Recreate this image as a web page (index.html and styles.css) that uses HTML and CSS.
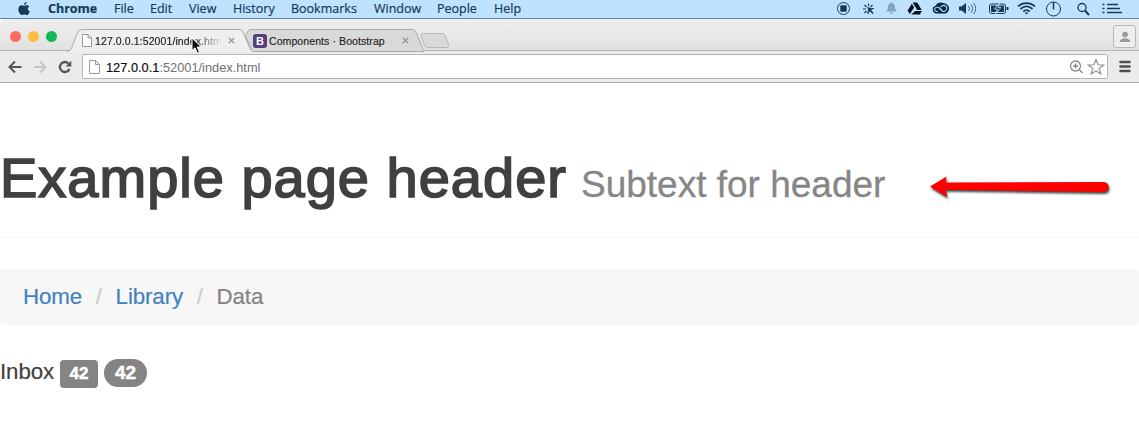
FILE: index.html
```html
<!DOCTYPE html>
<html lang="en">
<head>
<meta charset="utf-8">
<title>127.0.0.1:52001/index.html</title>
<link rel="stylesheet" href="styles.css">
</head>
<body>
<header class="menubar">
  <svg class="apple" width="12" height="14" viewBox="0 0 12 14"><path d="M8.6 0C8.7 1.5 7.500 3 6 3 5.900 1.600 7.200.2 8.600 0ZM6.200 3.900C7 3.900 7.600 3.200 8.800 3.200c.9 0 1.900.5 2.500 1.400-2.100 1.200-1.800 4 .5 4.900-.5 1.500-1.600 3.500-2.900 3.500-.9 0-1.300-.6-2.500-.6s-1.600.6-2.500.6C2.300 13 .3 10 .3 7.300c0-2.600 1.600-4.100 3.300-4.100 1.100 0 1.900.7 2.600.7Z"/></svg>
  <nav class="menus">
    <span class="m-chrome">Chrome</span><span class="m-file">File</span><span class="m-edit">Edit</span><span class="m-view">View</span><span class="m-history">History</span><span class="m-bookmarks">Bookmarks</span><span class="m-window">Window</span><span class="m-people">People</span><span class="m-help">Help</span>
  </nav>
  <svg class="status" width="302" height="18" viewBox="0 0 302 18" fill="none" stroke="#153b59">
    <circle cx="13.500" cy="8.500" r="6"/><rect x="10.300" y="5.300" width="6.400" height="6.400" rx="1" fill="#153b59" stroke="none"/>
    <path d="M38.500 3.500V6M34.500 5l2 2M42.500 5l-2 2M33 9h3M34.500 13l2-2M38 11v3M41.500 8.500H44" stroke-width="1.200"/><path d="M37.200 6.700l5.800 2.400-2 .9 2.700 2.900-1.200 1.100-2.600-2.800-1 1.900z" fill="#153b59" stroke="none"/>
    <path d="M61.500 2.200c.7 0 .9.600.9 1 2 .5 2.700 2 2.700 4 0 2.300.7 3.200 2.400 4.300H55.500c1.700-1.100 2.400-2 2.400-4.300 0-2 .7-3.500 2.700-4 0-.4.200-1 .9-1ZM59.700 12.500h3.600c-.4 1.800-3.200 1.800-3.600 0z" fill="#7fa6c5" stroke="none"/>
    <path d="M82.700 2.500h4.500l4.500 7.600h-4.500zM81.900 3.700l2.200 3.900-4.300 6.500-2.200-3.700zM85.300 11H92l-2.300 3.500h-8.500z" fill="#00101f" stroke="none"/>
    <path d="M106.500 13.500a4 4 0 0 1-1-7.800C107 2.500 111 1.500 114 3.300c5.500.5 7 7.500 2 10.200z" fill="#0b2841" stroke="none"/><path d="M112.300 10.500l-1.200-1.200C108.500 6.500 105.500 6.700 104.700 8.800c-.6 2 1.500 3.300 3.200 2.400M110.500 7.300c2-3 6-2.300 6.300.8.300 3-3.300 4.400-5.500 2.200L108 6.800" stroke="#a9d5f5" stroke-width="1.100"/>
    <path d="M129 6.500h2.500L136 3v11l-4.500-3.500H129z" fill="#153b59" stroke="none"/><path d="M138.500 6a4 4 0 0 1 0 5M141 4.500a6 6 0 0 1 0 8M143.500 3a8 8 0 0 1 0 11" opacity=".75"/>
    <rect x="159.500" y="4" width="16" height="9.500" rx="2"/><path d="M161 5.500h5.500l-1.500 3.500h2l-.8 3H161zM169.500 5.500h4.500V12h-6l1.500-3.500h-2zM176.500 7h2v3h-2z" fill="#153b59" stroke="none"/><path d="M169.500 3l-5 6h3l-2 5 5.500-6.500h-3z" fill="#153b59" stroke="#bfe2fb" stroke-width=".8"/>
    <path d="M188 6.300c5-4.300 12-4.300 17 0M190.500 9c3.700-3.200 8.300-3.200 12 0M193.300 11.500c2-1.700 4.400-1.700 6.400 0" stroke-width="1.700"/><path d="M194.500 12.500h4l-2 2z" fill="#153b59" stroke="none"/>
    <circle cx="223.500" cy="9" r="7"/><path d="M223.500 2v7.500" stroke-width="1.500"/>
    <circle cx="252" cy="7.500" r="4" stroke-width="1.300"/><path d="M255 10.500l4 4.500" stroke-width="2"/>
    <path d="M277 4.500h11M277 8.500h13M277 12.500h15" stroke-width="1.700"/><path d="M272.500 4.500h2M272.500 8.500h2M272.500 12.500h2" stroke-width="1.700"/>
  </svg>
</header>
<div class="tabstrip">
  <div class="lights"><i class="red"></i><i class="yellow"></i><i class="green"></i></div>
  <div class="tab tab-active">
    <svg class="shape" width="186" height="23" viewBox="0 0 186 23"><path d="M0 22.500C3 22 4 21 5 18L10 5Q11.500.5 15 .5H172Q175 .5 176.500 4L182 17Q184 22 186 22.500V23H0z" fill="#f0eff0"/><path d="M0 22.500C3 22 4 21 5 18L10 5Q11.500.5 15 .5H172Q175 .5 176.500 4L182 17Q184 22 186 22.500" fill="none" stroke="#aaa"/></svg>
    <svg class="doc" width="10" height="13" viewBox="0 0 10 13"><path d="M.5.500h5.500l3.500 3.500v8.500h-9zM6 .5V4h3.500" fill="#fff" stroke="#999"/></svg>
    <span class="title t-fade">127.0.0.1:52001/index.html</span>
    <svg class="close" width="7" height="7" viewBox="0 0 7 7"><path d="M.8.8l5.400 5.400M6.200.8L.8 6.200" stroke="#8b8b8b" stroke-width="1.200"/></svg>
  </div>
  <div class="tab tab-back">
    <svg class="shape" width="182" height="23" viewBox="0 0 182 23"><path d="M3.500 7Q6 .5 9 .5H170Q173 .5 174.500 4l5 13q1.500 4 3 5.500H10z" fill="#dad9da" stroke="#aaa"/></svg>
    <span class="bs">B</span>
    <span class="title">Components · Bootstrap</span>
    <svg class="close" width="7" height="7" viewBox="0 0 7 7"><path d="M.8.8l5.400 5.400M6.200.8L.8 6.200" stroke="#8b8b8b" stroke-width="1.200"/></svg>
  </div>
  <svg class="newtab" width="30" height="15" viewBox="0 0 30 15"><path d="M3 .5H22Q24.500.5 25.500 3l3 8.500q1 3-1.500 3H8Q5.500 14.500 4.500 12L1 3Q.3.5 3 .5z" fill="#dad9da" stroke="#b8b8b8"/></svg>
  <div class="user"><svg width="12" height="12" viewBox="0 0 12 12"><circle cx="6" cy="3.500" r="2.800"/><path d="M.8 11c0-5 10.400-5 10.400 0z"/></svg></div>
</div>
<div class="toolbar">
  <svg class="nav" width="66" height="14" viewBox="0 0 66 14" fill="none" stroke-width="2"><path d="M14.500 7H2.500M8 1.500L2.500 7 8 12.500" stroke="#555"/><path d="M27 7h11.500M33 1.500L38.500 7 33 12.500" stroke="#c6c6c6"/><path d="M62.500 9a5 5 0 1 1-1-5.500" stroke="#555" stroke-width="2.300"/><path d="M64.300.7v5.800H58.500z" fill="#555"/></svg>
  <div class="omnibox">
    <svg width="11" height="14" viewBox="0 0 11 14"><path d="M.5.500h6L10.500 4.500v9h-10zM6.500.5v4h4" fill="#fff" stroke="#999"/></svg>
    <span class="url"><b>127.0.0.1</b>:52001/index.html</span>
    <svg class="actions" width="36" height="18" viewBox="0 0 36 18" fill="none" stroke="#8c8c8c"><circle cx="5.500" cy="8" r="5" stroke-width="1.300"/><path d="M3 8h5M5.500 5.500v5M9.200 11.500l3.300 3.500" stroke-width="1.500"/><path d="M26 1.500l2 5.300 5.700.2-4.500 3.500 1.600 5.500-4.800-3.200-4.800 3.200 1.600-5.500L18.300 7l5.700-.2z" stroke-width="1.100"/></svg>
  </div>
  <svg class="burger" width="12" height="13" viewBox="0 0 12 13"><path d="M1.500 2h9M1.500 6.500h9M1.500 11h9" stroke="#505050" stroke-width="2.600" stroke-linecap="round"/></svg>
</div>
<main class="page">
  <div class="page-header">
    <h1>Example page header</h1><small>Subtext for header</small>
    <svg class="arrow" width="190" height="32" viewBox="0 0 190 32"><path d="M5 14.500L21.500 4.500 20.500 10.500 178 10Q183.500 10 183.500 15T178 20L20.500 17.800 22 25z" fill="#f00"/></svg>
  </div>
  <ol class="breadcrumb"><li><a>Home</a></li><li class="sep">/</li><li><a>Library</a></li><li class="sep">/</li><li class="current">Data</li></ol>
  <div class="inbox"><span class="word">Inbox</span><span class="label">42</span><span class="badge">42</span></div>
</main>
<svg class="cursor" width="12" height="18" viewBox="0 0 12 18"><path d="M1 1v12.500l3-2.700 2.300 5.400 2.200-1L6.200 10H10.500z" fill="#111" stroke="#fff"/></svg>
</body>
</html>
```
FILE: styles.css
```css
* { box-sizing: border-box; }
body { margin: 0; width: 1139px; height: 434px; overflow: hidden; background: #fff; font-family: "Liberation Sans", Arial, sans-serif; }
svg { display: block; flex: none; }

.menubar { display: flex; height: 19px; padding-left: 18px; background: #bfe2ff; border-bottom: 1px solid #5c87a5; color: #153b59; }
.apple { margin-top: 2px; fill: #153b59; }
.menus { display: flex; margin-left: 18px; font: 12.500px/17px "Open Sans", sans-serif; -webkit-text-stroke: .2px #153b59; white-space: nowrap; }
.menus span { flex: none; }
.m-chrome { width: 66px; font-weight: 700; }
.m-file { width: 36px; }
.m-edit { width: 39px; }
.m-view { width: 44px; }
.m-history { width: 58px; }
.m-bookmarks { width: 83px; }
.m-window { width: 63px; }
.m-people { width: 57px; }
.status { margin-left: auto; margin-right: 7px; }

.tabstrip { display: flex; height: 32px; background: linear-gradient(#f0eff0, #e2e1e2); border-bottom: 1px solid #b5b5b5; border-top-left-radius: 5px; }
.lights { display: flex; gap: 7px; width: 67px; padding: 12px 0 0 10px; }
.lights i { width: 11px; height: 11px; border-radius: 50%; }
.red { background: #ff6b60; }
.yellow { background: #ffbe42; }
.green { background: #14b758; }
.tab { position: relative; display: flex; align-items: center; height: 23px; margin-top: 10px; font-size: 10.500px; color: #222; white-space: nowrap; }
.tab > * { position: relative; }
.tab .shape { position: absolute; left: 0; top: 0; }
.tab-active { width: 186px; padding-left: 15px; z-index: 2; }
.tab-back { width: 182px; margin-left: -11px; padding-left: 11px; }
.tab .title { -webkit-text-stroke: .15px #222; }
.t-fade { width: 131px; margin-left: 3px; letter-spacing: .1px; mask-image: linear-gradient(90deg, #000 76%, transparent 97%); }
.tab-active .close { margin-left: 2px; }
.bs { width: 14px; height: 14px; border-radius: 3px; background: #563d7c; color: #fff; font: bold 11px/14px "Liberation Sans", sans-serif; text-align: center; }
.tab-back .title { width: 131px; margin-left: 2px; letter-spacing: .09px; }
.tab-back .close { margin-left: 2px; }
.newtab { margin: 14px 0 0 -4px; }
.user { display: flex; align-items: center; justify-content: center; width: 23px; height: 23px; margin: 6px 3px 0 auto; border: 1px solid #b8b8b8; border-radius: 3px; background: #efeeef; }
.user svg { fill: #999; }

.toolbar { display: flex; align-items: center; height: 32px; padding-left: 7px; background: #ebebeb; border-bottom: 1px solid #aaa; }
.nav { margin-right: 9px; }
.omnibox { display: flex; align-items: center; width: 1026px; height: 25px; padding-left: 6px; background: #fff; border: 1px solid #b6b6b6; border-radius: 2px; }
.url { margin: 1px 0 0 6px; font-size: 12.800px; color: #707070; white-space: nowrap; }
.url b { font-weight: 400; color: #111; -webkit-text-stroke: .2px #111; }
.actions { margin-left: auto; margin-right: 1px; }
.burger { margin-left: 11px; }

.page { color: #404040; }
.page-header { display: flex; align-items: baseline; position: relative; height: 155px; padding-top: 62px; border-bottom: 1px solid #f4f4f4; white-space: nowrap; }
h1 { width: 581px; margin: 0; font-size: 56px; line-height: 66px; font-weight: 400; letter-spacing: 1px; -webkit-text-stroke: 1.700px #404040; }
small { font-size: 37px; line-height: 60px; color: #868686; -webkit-text-stroke: .3px #868686; }
.arrow { position: absolute; left: 925px; top: 89px; filter: drop-shadow(1px 2px 1px #444); }
.breadcrumb { display: flex; align-items: center; height: 56px; margin: 31px 0 0; padding: 0 0 0 23px; list-style: none; border-radius: 5px; background: #f7f7f7; font-size: 22.300px; line-height: 32px; letter-spacing: -.1px; -webkit-text-stroke: .2px; }
.breadcrumb a { color: #4282c0; }
.breadcrumb .sep { width: 33.500px; text-align: center; color: #ccc; }
.breadcrumb .current { color: #868383; }
.inbox { display: flex; align-items: center; height: 28px; margin-top: 34px; }
.word { width: 60px; margin-top: -2px; font-size: 22.300px; letter-spacing: -.1px; -webkit-text-stroke: .2px; }
.label, .badge { color: #fff; font-weight: 700; text-align: center; background: #858383; -webkit-text-stroke: .5px #fff; }
.label { width: 38px; height: 28px; margin-top: 2px; border-radius: 4px; font-size: 17px; line-height: 27px; }
.badge { width: 43px; height: 28px; margin-left: 6px; border-radius: 14px; font-size: 19px; line-height: 28px; }
.cursor { position: absolute; z-index: 3; left: 191px; top: 37px; }
```
